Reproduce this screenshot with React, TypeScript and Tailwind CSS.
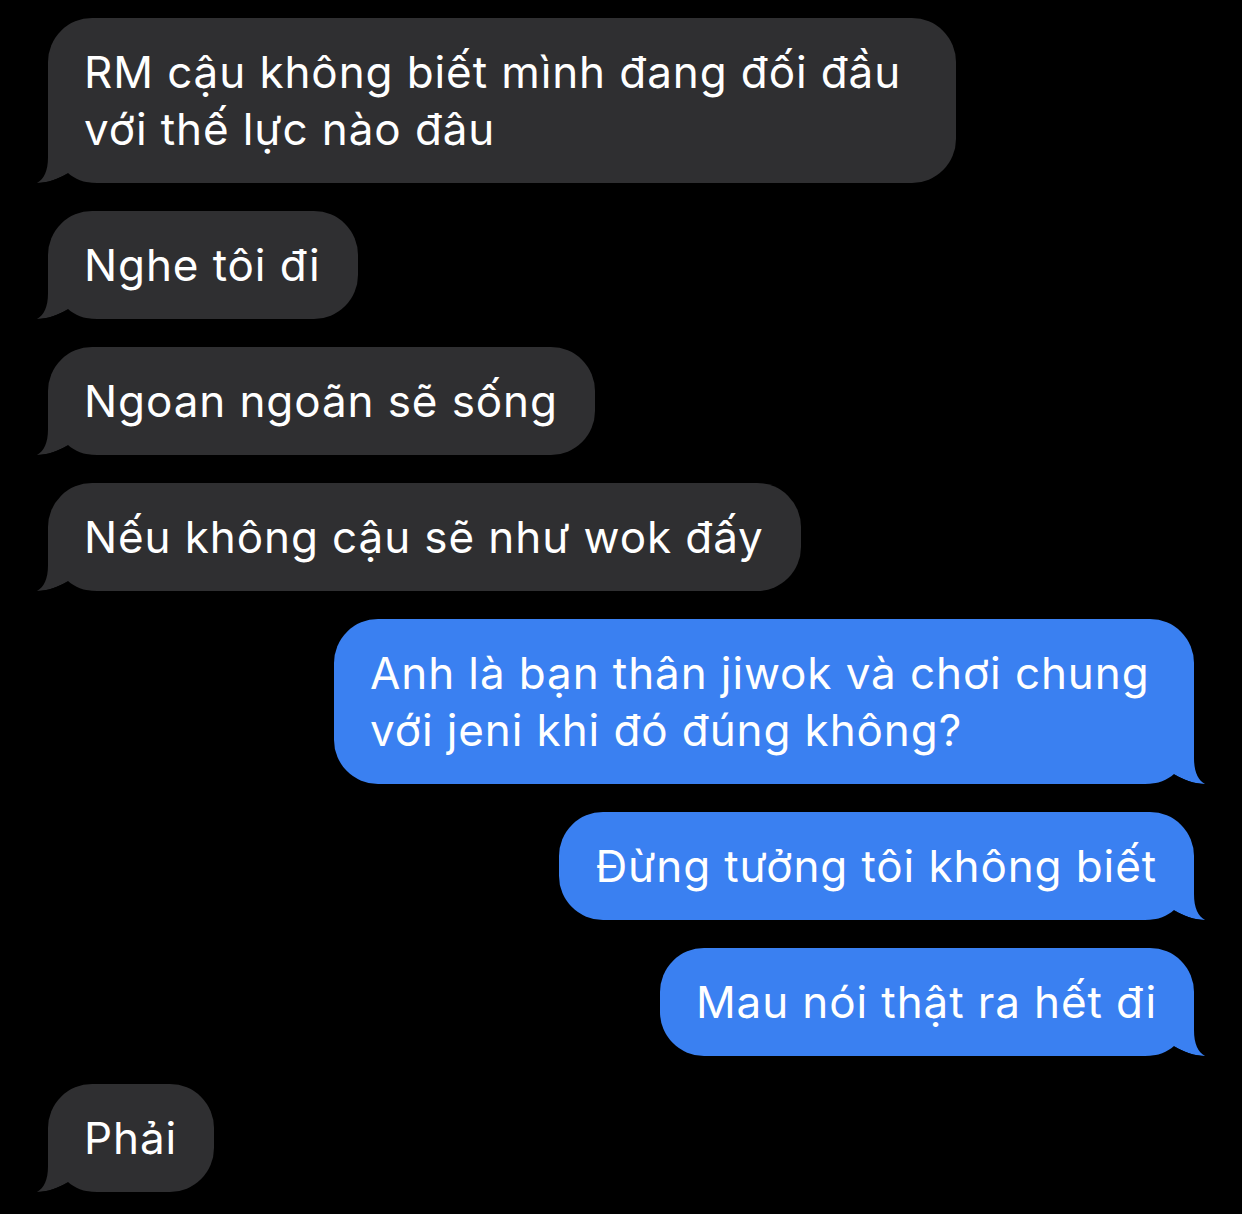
import React from "react";

interface Message {
  id: number;
  fromMe: boolean;
  lines: string[];
  width?: string;
}

const messages: Message[] = [
  { id: 1, fromMe: false, lines: ["RM cậu không biết mình đang đối đầu", "với thế lực nào đâu"], width: "w-[908px]" },
  { id: 2, fromMe: false, lines: ["Nghe tôi đi"] },
  { id: 3, fromMe: false, lines: ["Ngoan ngoãn sẽ sống"] },
  { id: 4, fromMe: false, lines: ["Nếu không cậu sẽ như wok đấy"] },
  { id: 5, fromMe: true, lines: ["Anh là bạn thân jiwok và chơi chung", "với jeni khi đó đúng không?"], width: "w-[860px]" },
  { id: 6, fromMe: true, lines: ["Đừng tưởng tôi không biết"] },
  { id: 7, fromMe: true, lines: ["Mau nói thật ra hết đi"] },
  { id: 8, fromMe: false, lines: ["Phải"] },
];

// little hook at the bottom corner of each bubble
const Tail: React.FC<{ fromMe: boolean; color: string }> = ({ fromMe, color }) => (
  <svg
    width="70"
    height="50"
    viewBox="0 0 70 50"
    className={
      fromMe
        ? "absolute bottom-0 right-[-11px] -scale-x-100"
        : "absolute bottom-0 left-[-11px]"
    }
  >
    <path
      d="M11,4 L11,24 C11,38 7,46 0,50 C10,50 22,46 31,40 C38,46 46,50 60,50 L70,50 L70,4 Z"
      fill={color}
    />
    <path d="M0,50 C10,50 22,46 31,40 C38,46 46,50 60,50 Z" fill="#000" />
  </svg>
);

const Bubble: React.FC<{ msg: Message }> = ({ msg }) => {
  const color = msg.fromMe ? "#3a80f1" : "#2f2f31";
  return (
    <div className={msg.fromMe ? "flex justify-end" : "flex justify-start"}>
      <div
        className={[
          "relative rounded-[44px] pl-[36px] pr-[37px] pt-[26px] pb-[25px]",
          msg.fromMe ? "bg-[#3a80f1]" : "bg-[#2f2f31]",
          msg.width ?? "",
        ].join(" ")}
      >
        <Tail fromMe={msg.fromMe} color={color} />
        <p className="relative whitespace-nowrap text-[44px] leading-[57px] tracking-[0.9px] text-white">
          {msg.lines.map((line, i) => (
            <React.Fragment key={i}>
              {line}
              {i < msg.lines.length - 1 && <br />}
            </React.Fragment>
          ))}
        </p>
      </div>
    </div>
  );
};

export default function App() {
  return (
    <div
      className="min-h-[1214px] w-[1242px] bg-black px-[48px] pt-[18px]"
      style={{ fontFamily: "Inter, 'Noto Sans', sans-serif" }}
    >
      <div className="flex flex-col gap-[28px]">
        {messages.map((m) => (
          <Bubble key={m.id} msg={m} />
        ))}
      </div>
    </div>
  );
}
